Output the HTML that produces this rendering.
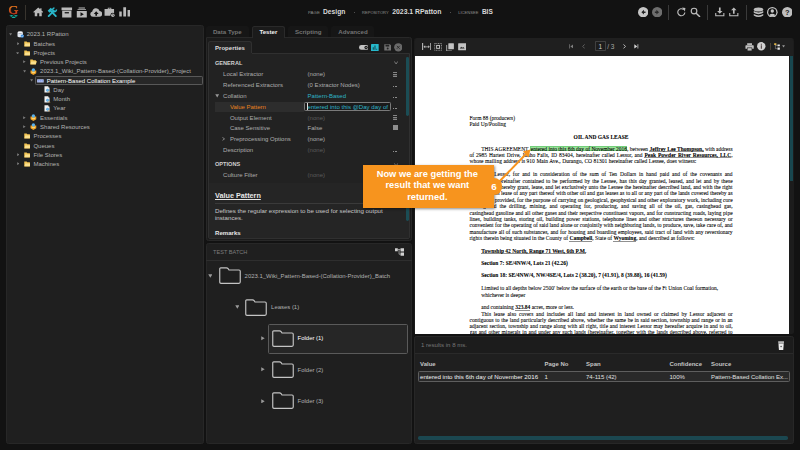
<!DOCTYPE html>
<html><head><meta charset="utf-8"><title>Grooper Design - Pattern-Based Collation</title>
<style>
html,body{margin:0;padding:0;}
body{width:800px;height:450px;overflow:hidden;background:#121212;position:relative;font-family:"Liberation Sans",sans-serif;}
div,svg{position:absolute;box-sizing:border-box;}
.t{white-space:nowrap;}
.d{white-space:nowrap;font-family:"Liberation Serif",serif;color:#000;-webkit-text-stroke:0.07px #000;}
.j{font-family:"Liberation Serif",serif;color:#000;-webkit-text-stroke:0.07px #000;text-align:justify;text-align-last:justify;white-space:nowrap;}
b{font-weight:700;}
u{text-decoration:none;background:linear-gradient(#000,#000) 0 97%/100% 0.45px no-repeat;}
</style></head><body>
<div style="left:6.10px;top:25.30px;width:197.60px;height:418.50px;background:#1f1f1f;border-radius:2.5px;border:0.6px solid #272727;"></div>
<div style="left:205.70px;top:37.00px;width:206.20px;height:203.70px;background:#1b1b1b;border-radius:0 2.5px 2.5px 2.5px;border:0.5px solid #282828;"></div>
<div style="left:205.70px;top:242.90px;width:206.20px;height:200.90px;background:#1f1f1f;border-radius:2.5px;border:0.6px solid #272727;"></div>
<div style="left:414.10px;top:37.50px;width:379.90px;height:296.60px;background:#1c1c1c;border-radius:2.5px;"></div>
<div style="left:414.10px;top:335.80px;width:379.90px;height:108.00px;background:#1f1f1f;border-radius:2.5px;border:0.6px solid #272727;"></div>
<div class="t" style="left:8.50px;top:2.60px;line-height:14px;font-size:13.4px;color:transparent;font-family:'Liberation Serif',serif;background:linear-gradient(#ea8a1c 25%,#d42a20 80%);-webkit-background-clip:text;background-clip:text;-webkit-text-stroke:0.25px #d85a1e;">G</div>
<svg style="left:8.80px;top:14.60px;" width="9.40" height="3.80" viewBox="0 0 19 8"><path d="M0.4 1.8 L4.8 0.2 L9 1.8 L4.8 3.6Z M9.8 1.8 L14.2 0.2 L18.4 1.8 L14.2 3.6Z M4.8 5.4 L9.4 3.4 L14 5.4 L9.4 7.6Z" fill="#12b2a2"/></svg>
<div style="left:24.80px;top:4.80px;width:1.10px;height:15.20px;background:#38342e;"></div>
<svg style="left:32.80px;top:7.00px;" width="10.50" height="9.50" viewBox="0 0 21 19"><path d="M10.5 1 L0.5 10 L2 11.5 L3.5 10.2 V18.5 H8.5 V12.5 H12.5 V18.5 H17.5 V10.2 L19 11.5 L20.5 10 L17 6.8 V2.5 H14.5 V4.6Z" fill="#b9b9b9"/></svg>
<svg style="left:47.20px;top:6.90px;" width="10.40" height="10.40" viewBox="0 0 20 20"><g fill="none" stroke="#29b8cb" stroke-linecap="round"><path d="M3.2 17.4 L13.2 7.4" stroke-width="3.5"/><path d="M17 17.4 L8.2 8.6" stroke-width="3.5"/><path d="M3.2 9 L9 3.2" stroke-width="5.2" stroke-linecap="butt"/><path d="M18 4.8 A3.5 3.5 0 1 1 14.4 1.9" stroke-width="3" stroke-linecap="butt"/></g></svg>
<svg style="left:61.10px;top:6.50px;" width="11.60" height="11.20" viewBox="0 0 22 21"><path d="M1 1 H21 V6 H1Z M2.2 7.2 H19.8 V20 H2.2Z" fill="#b9b9b9"/><rect x="7" y="9.6" width="8" height="2.4" fill="#121212"/></svg>
<svg style="left:75.50px;top:6.50px;" width="11.60" height="11.20" viewBox="0 0 22 21"><path d="M5 1 H17 V2.6 H5Z M3 4 H19 V5.8 H3Z M1.5 7.4 H20.5 V20 H1.5Z" fill="#b9b9b9"/><path d="M8.5 9.8 L14.8 13.7 L8.5 17.6Z" fill="#121212"/></svg>
<svg style="left:89.80px;top:7.60px;" width="12.40" height="9.20" viewBox="0 0 25 18"><path d="M6 17.5 A5.5 5.5 0 0 1 4.6 6.7 A7.6 7.6 0 0 1 19.4 5.6 A6 6 0 0 1 19.5 17.5Z" fill="#b9b9b9"/><path d="M12.5 6.5 L17.4 11.6 H14.2 V15.6 H10.8 V11.6 H7.6Z" fill="#121212"/></svg>
<svg style="left:104.30px;top:6.80px;" width="11.60" height="11.00" viewBox="0 0 23 22"><path d="M7.5 4 V1.5 H14.5 V4 H20 V17.5 H1 V4Z M9.2 3 V4 H12.8 V3Z" fill="#b9b9b9"/><circle cx="17.6" cy="16.4" r="4.8" fill="#121212"/><circle cx="17.6" cy="16.4" r="3.5" fill="#b9b9b9"/><path d="M17.3 14 H18.2 V16.2 L19.6 17.2 L19.1 17.9 L17.3 16.7Z" fill="#121212"/></svg>
<svg style="left:118.60px;top:7.00px;" width="11.60" height="9.60" viewBox="0 0 23 19"><path d="M0.5 9 H5.5 V19 H0.5Z M8.5 0.5 H14 V19 H8.5Z M17 6 H22.5 V19 H17Z" fill="#b9b9b9"/></svg>
<div class="t" style="left:308.00px;top:7.70px;line-height:10px;font-size:4.35px;color:#8e8e8e;letter-spacing:0.05px;">PAGE</div>
<div class="t" style="left:323.00px;top:7.10px;line-height:10px;font-size:6.7px;color:#d9d9d9;font-weight:700;">Design</div>
<div style="left:353.50px;top:11.60px;width:1.20px;height:1.20px;background:#666;border-radius:50%;"></div>
<div class="t" style="left:362.00px;top:7.70px;line-height:10px;font-size:4.1px;color:#8e8e8e;">REPOSITORY</div>
<div class="t" style="left:392.20px;top:7.10px;line-height:10px;font-size:6.86px;color:#d9d9d9;font-weight:700;">2023.1 RPatton</div>
<div style="left:449.80px;top:11.60px;width:1.20px;height:1.20px;background:#666;border-radius:50%;"></div>
<div class="t" style="left:458.20px;top:7.70px;line-height:10px;font-size:4.1px;color:#8e8e8e;">LICENSEE</div>
<div class="t" style="left:481.90px;top:7.10px;line-height:10px;font-size:6.5px;color:#d9d9d9;font-weight:700;">BIS</div>
<svg style="left:637.50px;top:6.90px;" width="10.40" height="10.40" viewBox="0 0 20 20"><circle cx="10" cy="10" r="10" fill="#c6c6c6"/><path d="M11.5 5.5 L6.5 10 L11.5 14.5 V11.5 H14.5 V8.5 H11.5Z" fill="#222"/></svg>
<svg style="left:652.00px;top:6.90px;" width="10.40" height="10.40" viewBox="0 0 20 20"><circle cx="10" cy="10" r="10" fill="#6e6e6e"/><path d="M8.5 5.5 L13.5 10 L8.5 14.5 V11.5 H5.5 V8.5 H8.5Z" fill="#2a2a2a"/></svg>
<div style="left:668.40px;top:5.00px;width:0.70px;height:15.00px;background:#3a3a3a;"></div>
<svg style="left:675.80px;top:6.80px;" width="10.60" height="10.60" viewBox="0 0 21 21"><path d="M15.2 5.2 A7 7 0 1 0 17.5 10.8" fill="none" stroke="#bcbcbc" stroke-width="2.3"/><path d="M11.5 1.5 H18.2 V8.3Z" fill="#bcbcbc" transform="rotate(8 15 5)"/></svg>
<svg style="left:690.30px;top:6.80px;" width="10.60" height="10.60" viewBox="0 0 21 21"><circle cx="8" cy="8" r="5.6" fill="none" stroke="#bcbcbc" stroke-width="2.3"/><path d="M12.2 12.2 L19 19" stroke="#bcbcbc" stroke-width="2.8" stroke-linecap="round"/></svg>
<div style="left:706.80px;top:5.00px;width:0.70px;height:15.00px;background:#3a3a3a;"></div>
<svg style="left:715.30px;top:7.20px;" width="9.60" height="9.80" viewBox="0 0 19 20"><path d="M7.8 1 H11.2 V8 H15 L9.5 13.6 L4 8 H7.8Z" fill="#bcbcbc"/><path d="M1.2 12.5 V18 H17.8 V12.5" fill="none" stroke="#bcbcbc" stroke-width="2.2"/></svg>
<svg style="left:729.30px;top:7.20px;" width="9.60" height="9.80" viewBox="0 0 19 20"><path d="M7.8 13.6 H11.2 V6.6 H15 L9.5 1 L4 6.6 H7.8Z" fill="#bcbcbc"/><path d="M1.2 12.5 V18 H17.8 V12.5" fill="none" stroke="#bcbcbc" stroke-width="2.2"/></svg>
<div style="left:745.70px;top:5.00px;width:0.70px;height:15.00px;background:#3a3a3a;"></div>
<svg style="left:752.60px;top:6.60px;" width="11.00" height="11.00" viewBox="0 0 22 22"><ellipse cx="11" cy="5" rx="9.5" ry="4" fill="#bebebe"/><path d="M1.5 8.2 Q11 14 20.5 8.2 V11.6 Q11 17.4 1.5 11.6Z M1.5 14 Q11 19.8 20.5 14 V17 Q11 23 1.5 17Z" fill="#bebebe"/></svg>
<svg style="left:767.30px;top:6.80px;" width="10.60" height="10.60" viewBox="0 0 20 20"><circle cx="10" cy="10" r="10" fill="#c6c6c6"/><circle cx="10" cy="10" r="7.6" fill="#121212"/><circle cx="10" cy="7.6" r="3.2" fill="#c6c6c6"/><path d="M3.8 15.4 Q10 10 16.2 15.4 Q10 19.4 3.8 15.4Z" fill="#c6c6c6"/></svg>
<svg style="left:781.90px;top:6.80px;" width="10.60" height="10.60" viewBox="0 0 20 20"><circle cx="10" cy="10" r="10" fill="#bebebe"/><text x="10" y="15" text-anchor="middle" font-family="Liberation Sans, sans-serif" font-weight="700" font-size="14" fill="#1a1a1a">?</text></svg>
<div style="left:35.10px;top:75.70px;width:167.60px;height:9.20px;background:#272727;border:0.55px solid #585858;border-radius:1.2px;"></div>
<svg style="left:9.36px;top:33.07px;" width="3.28" height="2.79" viewBox="0 0 8 7"><path d="M0.3 0.5 H7.7 L4 6.6Z" fill="#7e7e7e"/></svg>
<svg style="left:17.00px;top:30.70px;" width="7.40" height="7.40" viewBox="0 0 15 15"><ellipse cx="6.5" cy="2.8" rx="5.5" ry="2.3" fill="#f4f6fa"/><path d="M1 3.6 V11.2 Q6.5 14.6 12 11.2 V3.6 Q6.5 6.6 1 3.6Z" fill="#dfe6f0"/><circle cx="10.8" cy="10.4" r="3.4" fill="#3d8fe0"/><path d="M9 10.4 L10.4 11.8 L12.8 9.2" stroke="#fff" stroke-width="1" fill="none"/></svg>
<div class="t" style="left:26.75px;top:29.40px;line-height:10px;font-size:6.02px;color:#b2b2b2;">2023.1 RPatton</div>
<svg style="left:16.52px;top:41.92px;" width="2.79" height="3.28" viewBox="0 0 7 8"><path d="M0.5 0.3 V7.7 L6.6 4Z" fill="#7e7e7e"/></svg>
<svg style="left:23.50px;top:40.86px;" width="6.80" height="5.80" viewBox="0 0 14 12"><path d="M0.5 1.2 H5.4 L6.8 2.8 H12.2 V4.2 H13.8 L12.2 11.5 H0.5Z" fill="#f3c453"/><path d="M2.4 5.2 H13.4 L11.8 10.8 H1.2Z" fill="#fbe08e"/></svg>
<div class="t" style="left:33.40px;top:38.66px;line-height:10px;font-size:6.02px;color:#b2b2b2;">Batches</div>
<svg style="left:16.11px;top:51.59px;" width="3.28" height="2.79" viewBox="0 0 8 7"><path d="M0.3 0.5 H7.7 L4 6.6Z" fill="#7e7e7e"/></svg>
<svg style="left:23.50px;top:50.12px;" width="6.80" height="5.80" viewBox="0 0 14 12"><path d="M0.5 1.2 H5.4 L6.8 2.8 H12.2 V4.2 H13.8 L12.2 11.5 H0.5Z" fill="#f3c453"/><path d="M2.4 5.2 H13.4 L11.8 10.8 H1.2Z" fill="#fbe08e"/></svg>
<div class="t" style="left:33.40px;top:47.92px;line-height:10px;font-size:6.02px;color:#b2b2b2;">Projects</div>
<svg style="left:23.27px;top:60.44px;" width="2.79" height="3.28" viewBox="0 0 7 8"><path d="M0.5 0.3 V7.7 L6.6 4Z" fill="#7e7e7e"/></svg>
<svg style="left:30.20px;top:59.38px;" width="6.80" height="5.80" viewBox="0 0 14 12"><path d="M0.5 1.2 H5.4 L6.8 2.8 H12.2 V4.2 H13.8 L12.2 11.5 H0.5Z" fill="#f3c453"/><path d="M2.4 5.2 H13.4 L11.8 10.8 H1.2Z" fill="#fbe08e"/></svg>
<div class="t" style="left:40.05px;top:57.18px;line-height:10px;font-size:6.02px;color:#b2b2b2;">Previous Projects</div>
<svg style="left:22.86px;top:70.11px;" width="3.28" height="2.79" viewBox="0 0 8 7"><path d="M0.3 0.5 H7.7 L4 6.6Z" fill="#7e7e7e"/></svg>
<svg style="left:30.40px;top:67.74px;" width="6.80" height="7.20" viewBox="0 0 14 15"><path d="M1 5 H13 V11 L7 14.6 L1 11Z" fill="#f0a428"/><circle cx="7" cy="4" r="3.6" fill="#59b0ea"/><path d="M3.6 8.2 H10.4 V10.6 H3.6Z" fill="#fbd372"/></svg>
<div class="t" style="left:40.05px;top:66.44px;line-height:10px;font-size:6.02px;color:#b2b2b2;">2023.1_Wiki_Pattern-Based-(Collation-Provider)_Project</div>
<svg style="left:29.61px;top:79.37px;" width="3.28" height="2.79" viewBox="0 0 8 7"><path d="M0.3 0.5 H7.7 L4 6.6Z" fill="#7e7e7e"/></svg>
<svg style="left:37.10px;top:79.20px;" width="6.80" height="3.80" viewBox="0 0 14 8"><rect x="0" y="0.3" width="14" height="7.2" rx="0.8" fill="#b4c2f0"/><path d="M1.5 3 H4.5 V5 H1.5Z M5.8 3 H8.6 V5 H5.8Z M9.8 3 H12.6 V5 H9.8Z" fill="#5f7fd8"/></svg>
<div class="t" style="left:46.70px;top:75.70px;line-height:10px;font-size:6.02px;color:#ffffff;">Pattern-Based Collation Example</div>
<svg style="left:43.80px;top:86.46px;" width="6.80" height="7.00" viewBox="0 0 14 14"><path d="M1 0.5 H8 L11.4 3.8 V13 H1Z" fill="#f1f1f1"/><path d="M8 0.5 V3.8 H11.4Z" fill="#bcbcbc"/><circle cx="7.4" cy="8.6" r="2.5" fill="#6fbdf0" stroke="#2d7fc4" stroke-width="0.8"/><path d="M9.4 10.6 L12 13.2" stroke="#e7a22a" stroke-width="1.5"/></svg>
<div class="t" style="left:53.35px;top:84.96px;line-height:10px;font-size:6.02px;color:#b2b2b2;">Day</div>
<svg style="left:43.80px;top:95.72px;" width="6.80" height="7.00" viewBox="0 0 14 14"><path d="M1 0.5 H8 L11.4 3.8 V13 H1Z" fill="#f1f1f1"/><path d="M8 0.5 V3.8 H11.4Z" fill="#bcbcbc"/><circle cx="7.4" cy="8.6" r="2.5" fill="#6fbdf0" stroke="#2d7fc4" stroke-width="0.8"/><path d="M9.4 10.6 L12 13.2" stroke="#e7a22a" stroke-width="1.5"/></svg>
<div class="t" style="left:53.35px;top:94.22px;line-height:10px;font-size:6.02px;color:#b2b2b2;">Month</div>
<svg style="left:43.80px;top:104.98px;" width="6.80" height="7.00" viewBox="0 0 14 14"><path d="M1 0.5 H8 L11.4 3.8 V13 H1Z" fill="#f1f1f1"/><path d="M8 0.5 V3.8 H11.4Z" fill="#bcbcbc"/><circle cx="7.4" cy="8.6" r="2.5" fill="#6fbdf0" stroke="#2d7fc4" stroke-width="0.8"/><path d="M9.4 10.6 L12 13.2" stroke="#e7a22a" stroke-width="1.5"/></svg>
<div class="t" style="left:53.35px;top:103.48px;line-height:10px;font-size:6.02px;color:#b2b2b2;">Year</div>
<svg style="left:23.27px;top:116.00px;" width="2.79" height="3.28" viewBox="0 0 7 8"><path d="M0.5 0.3 V7.7 L6.6 4Z" fill="#7e7e7e"/></svg>
<svg style="left:30.40px;top:114.04px;" width="6.80" height="7.20" viewBox="0 0 14 15"><path d="M1 5 H13 V11 L7 14.6 L1 11Z" fill="#f0a428"/><circle cx="7" cy="4" r="3.6" fill="#59b0ea"/><path d="M3.6 8.2 H10.4 V10.6 H3.6Z" fill="#fbd372"/></svg>
<div class="t" style="left:40.05px;top:112.74px;line-height:10px;font-size:6.02px;color:#b2b2b2;">Essentials</div>
<svg style="left:23.27px;top:125.26px;" width="2.79" height="3.28" viewBox="0 0 7 8"><path d="M0.5 0.3 V7.7 L6.6 4Z" fill="#7e7e7e"/></svg>
<svg style="left:30.40px;top:123.30px;" width="6.80" height="7.20" viewBox="0 0 14 15"><path d="M1 5 H13 V11 L7 14.6 L1 11Z" fill="#f0a428"/><circle cx="7" cy="4" r="3.6" fill="#59b0ea"/><path d="M3.6 8.2 H10.4 V10.6 H3.6Z" fill="#fbd372"/></svg>
<div class="t" style="left:40.05px;top:122.00px;line-height:10px;font-size:6.02px;color:#b2b2b2;">Shared Resources</div>
<svg style="left:23.50px;top:133.46px;" width="6.80" height="5.80" viewBox="0 0 14 12"><path d="M0.5 1.2 H5.4 L6.8 2.8 H12.2 V4.2 H13.8 L12.2 11.5 H0.5Z" fill="#f3c453"/><path d="M2.4 5.2 H13.4 L11.8 10.8 H1.2Z" fill="#fbe08e"/></svg>
<div class="t" style="left:33.40px;top:131.26px;line-height:10px;font-size:6.02px;color:#b2b2b2;">Processes</div>
<svg style="left:23.50px;top:142.72px;" width="6.80" height="5.80" viewBox="0 0 14 12"><path d="M0.5 1.2 H5.4 L6.8 2.8 H12.2 V4.2 H13.8 L12.2 11.5 H0.5Z" fill="#f3c453"/><path d="M2.4 5.2 H13.4 L11.8 10.8 H1.2Z" fill="#fbe08e"/></svg>
<div class="t" style="left:33.40px;top:140.52px;line-height:10px;font-size:6.02px;color:#b2b2b2;">Queues</div>
<svg style="left:16.52px;top:153.04px;" width="2.79" height="3.28" viewBox="0 0 7 8"><path d="M0.5 0.3 V7.7 L6.6 4Z" fill="#7e7e7e"/></svg>
<svg style="left:23.50px;top:151.98px;" width="6.80" height="5.80" viewBox="0 0 14 12"><path d="M0.5 1.2 H5.4 L6.8 2.8 H12.2 V4.2 H13.8 L12.2 11.5 H0.5Z" fill="#f3c453"/><path d="M2.4 5.2 H13.4 L11.8 10.8 H1.2Z" fill="#fbe08e"/></svg>
<div class="t" style="left:33.40px;top:149.78px;line-height:10px;font-size:6.02px;color:#b2b2b2;">File Stores</div>
<svg style="left:16.52px;top:162.30px;" width="2.79" height="3.28" viewBox="0 0 7 8"><path d="M0.5 0.3 V7.7 L6.6 4Z" fill="#7e7e7e"/></svg>
<svg style="left:23.50px;top:161.24px;" width="6.80" height="5.80" viewBox="0 0 14 12"><path d="M0.5 1.2 H5.4 L6.8 2.8 H12.2 V4.2 H13.8 L12.2 11.5 H0.5Z" fill="#f3c453"/><path d="M2.4 5.2 H13.4 L11.8 10.8 H1.2Z" fill="#fbe08e"/></svg>
<div class="t" style="left:33.40px;top:159.04px;line-height:10px;font-size:6.02px;color:#b2b2b2;">Machines</div>
<div style="left:206.00px;top:25.80px;width:43.00px;height:11.20px;background:#161616;border-radius:2.5px 2.5px 0 0;"></div>
<div class="t" style="left:212.90px;top:26.80px;line-height:10px;font-size:6.15px;color:#737373;font-weight:700;">Data Type</div>
<div style="left:288.20px;top:25.80px;width:39.40px;height:11.20px;background:#161616;border-radius:2.5px 2.5px 0 0;"></div>
<div class="t" style="left:294.90px;top:26.80px;line-height:10px;font-size:6.15px;color:#737373;font-weight:700;">Scripting</div>
<div style="left:331.30px;top:25.80px;width:42.70px;height:11.20px;background:#161616;border-radius:2.5px 2.5px 0 0;"></div>
<div class="t" style="left:338.30px;top:26.80px;line-height:10px;font-size:6.15px;color:#737373;font-weight:700;">Advanced</div>
<div style="left:252.10px;top:25.80px;width:32.50px;height:11.80px;background:#1b1b1b;border-radius:2.5px 2.5px 0 0;border:0.5px solid #2a2a2a;border-bottom:none;"></div>
<div class="t" style="left:259.40px;top:26.80px;line-height:10px;font-size:6.15px;color:#f2f2f2;font-weight:700;">Tester</div>
<div style="left:208.10px;top:41.10px;width:44.00px;height:13.00px;background:#222222;border-radius:2.5px 2.5px 0 0;border:0.5px solid #303030;border-bottom:none;"></div>
<div style="left:208.10px;top:53.40px;width:201.80px;height:185.20px;background:#222222;border:0.5px solid #303030;border-radius:0 0 2px 2px;"></div>
<div style="left:208.60px;top:53.00px;width:43.00px;height:1.20px;background:#222222;"></div>
<div class="t" style="left:215.00px;top:43.00px;line-height:10px;font-size:6.06px;color:#dedede;font-weight:700;">Properties</div>
<svg style="left:358.70px;top:45.10px;" width="9.60" height="4.90" viewBox="0 0 20 10"><rect x="0" y="0" width="20" height="10" rx="5" fill="#c4c4c4"/><circle cx="14.8" cy="5" r="3.6" fill="#1e1e1e"/><circle cx="14.8" cy="5" r="1.1" fill="#c4c4c4"/></svg>
<svg style="left:371.40px;top:43.80px;" width="7.70" height="7.20" viewBox="0 0 16 15"><rect width="16" height="15" rx="0.8" fill="#27b9cc"/><path d="M3.6 7 H5.8 V12 H3.6Z M7.2 3.2 H9.4 V12 H7.2Z M10.8 9.8 H12.8 V12 H10.8Z" fill="#124c55"/></svg>
<svg style="left:383.50px;top:44.30px;" width="7.40" height="6.80" viewBox="0 0 15 14"><path d="M0.5 0.5 H11.8 L14.5 3 V13.5 H0.5Z" fill="#727272"/><rect x="3" y="1.6" width="7.6" height="3.6" fill="#222"/><circle cx="7.5" cy="9.4" r="2" fill="#222"/></svg>
<svg style="left:393.50px;top:43.30px;" width="8.60" height="8.60" viewBox="0 0 17 17"><circle cx="8.5" cy="8.5" r="8.2" fill="#6a6a6a"/><path d="M5.6 5.6 L11.4 11.4 M11.4 5.6 L5.6 11.4" stroke="#262626" stroke-width="1.7"/></svg>
<div class="t" style="left:215.00px;top:57.80px;line-height:10px;font-size:5.6px;color:#d0d0d0;font-weight:700;">GENERAL</div>
<svg style="left:394.30px;top:61.30px;" width="4.20" height="3.60" viewBox="0 0 8 7"><path d="M0.6 0.8 L4 5.8 L7.4 0.8" fill="none" stroke="#a0a0a0" stroke-width="1.3"/></svg>
<div class="t" style="left:215.00px;top:159.10px;line-height:10px;font-size:5.6px;color:#d0d0d0;font-weight:700;">OPTIONS</div>
<svg style="left:394.30px;top:162.60px;" width="4.20" height="3.60" viewBox="0 0 8 7"><path d="M0.6 0.8 L4 5.8 L7.4 0.8" fill="none" stroke="#a0a0a0" stroke-width="1.3"/></svg>
<div style="left:215.00px;top:101.60px;width:89.20px;height:10.00px;background:#2d2d2d;"></div>
<div class="t" style="left:223.10px;top:69.30px;line-height:10px;font-size:6.02px;color:#adadad;">Local Extractor</div>
<div class="t" style="left:307.60px;top:69.30px;line-height:10px;font-size:6.02px;color:#adadad;">(none)</div>
<svg style="left:392.80px;top:71.70px;" width="4.40" height="5.40" viewBox="0 0 8 10"><path d="M0 0.4 H8 V2 H0Z M0 4.2 H8 V5.8 H0Z M0 8 H8 V9.6 H0Z" fill="#a8a8a8"/></svg>
<div class="t" style="left:223.10px;top:80.00px;line-height:10px;font-size:6.02px;color:#adadad;">Referenced Extractors</div>
<div class="t" style="left:307.60px;top:80.00px;line-height:10px;font-size:6.02px;color:#adadad;">(0 Extractor Nodes)</div>
<div style="left:392.90px;top:86.10px;width:0.90px;height:0.90px;background:#8e8e8e;"></div>
<div style="left:394.55px;top:86.10px;width:0.90px;height:0.90px;background:#8e8e8e;"></div>
<div style="left:396.20px;top:86.10px;width:0.90px;height:0.90px;background:#8e8e8e;"></div>
<svg style="left:215.30px;top:94.10px;" width="4.40" height="3.70" viewBox="0 0 8 7"><path d="M0.3 0.5 H7.7 L4 6.6Z" fill="#989898"/></svg>
<div class="t" style="left:223.10px;top:90.80px;line-height:10px;font-size:6.02px;color:#adadad;">Collation</div>
<div class="t" style="left:307.60px;top:90.80px;line-height:10px;font-size:6.02px;color:#2fb4c8;">Pattern-Based</div>
<div style="left:392.90px;top:96.90px;width:0.90px;height:0.90px;background:#8e8e8e;"></div>
<div style="left:394.55px;top:96.90px;width:0.90px;height:0.90px;background:#8e8e8e;"></div>
<div style="left:396.20px;top:96.90px;width:0.90px;height:0.90px;background:#8e8e8e;"></div>
<div class="t" style="left:229.90px;top:101.60px;line-height:10px;font-size:6.02px;color:#e8821e;">Value Pattern</div>
<div style="left:392.90px;top:107.70px;width:0.90px;height:0.90px;background:#8e8e8e;"></div>
<div style="left:394.55px;top:107.70px;width:0.90px;height:0.90px;background:#8e8e8e;"></div>
<div style="left:396.20px;top:107.70px;width:0.90px;height:0.90px;background:#8e8e8e;"></div>
<div style="left:304.20px;top:101.90px;width:86.80px;height:9.50px;background:#1a1a1a;border:0.55px solid #7a7a7a;border-radius:1.3px;overflow:hidden;"></div>
<div style="left:307.20px;top:103.30px;width:0.50px;height:6.60px;background:#e0e0e0;"></div>
<div class="t" style="left:307.60px;top:101.60px;line-height:10px;font-size:6.1px;color:#2fb4c8;">entered into this @Day day of</div>
<div class="t" style="left:229.90px;top:112.50px;line-height:10px;font-size:6.02px;color:#adadad;">Output Element</div>
<div class="t" style="left:307.60px;top:112.50px;line-height:10px;font-size:6.02px;color:#5c5c5c;">(none)</div>
<svg style="left:392.80px;top:114.90px;" width="4.40" height="5.40" viewBox="0 0 8 10"><path d="M0 0.4 H8 V2 H0Z M0 4.2 H8 V5.8 H0Z M0 8 H8 V9.6 H0Z" fill="#a8a8a8"/></svg>
<div class="t" style="left:229.90px;top:123.30px;line-height:10px;font-size:6.02px;color:#adadad;">Case Sensitive</div>
<div class="t" style="left:307.60px;top:123.30px;line-height:10px;font-size:6.02px;color:#adadad;">False</div>
<div style="left:392.80px;top:125.20px;width:5.00px;height:4.90px;background:#8e8e8e;"></div>
<svg style="left:222.40px;top:137.20px;" width="3.20" height="3.80" viewBox="0 0 7 8"><path d="M1 0.8 L5.6 4 L1 7.2" fill="none" stroke="#b0b0b0" stroke-width="1.5"/></svg>
<div class="t" style="left:229.90px;top:134.10px;line-height:10px;font-size:6.02px;color:#adadad;">Preprocessing Options</div>
<div class="t" style="left:307.60px;top:134.10px;line-height:10px;font-size:6.02px;color:#adadad;">(none)</div>
<div class="t" style="left:223.10px;top:144.90px;line-height:10px;font-size:6.02px;color:#adadad;">Description</div>
<div class="t" style="left:307.60px;top:144.90px;line-height:10px;font-size:6.02px;color:#5c5c5c;">(none)</div>
<div style="left:392.90px;top:151.00px;width:0.90px;height:0.90px;background:#8e8e8e;"></div>
<div style="left:394.55px;top:151.00px;width:0.90px;height:0.90px;background:#8e8e8e;"></div>
<div style="left:396.20px;top:151.00px;width:0.90px;height:0.90px;background:#8e8e8e;"></div>
<div class="t" style="left:223.10px;top:170.10px;line-height:10px;font-size:6.02px;color:#adadad;">Culture Filter</div>
<div class="t" style="left:307.60px;top:170.10px;line-height:10px;font-size:6.02px;color:#5c5c5c;">(none)</div>
<div style="left:406.10px;top:57.10px;width:2.80px;height:59.30px;background:#1b4d55;border-radius:1.4px;"></div>
<div style="left:208.60px;top:183.30px;width:200.80px;height:55.00px;background:#252525;"></div>
<div class="t" style="left:215.00px;top:190.60px;line-height:10px;font-size:7.24px;color:#e6e6e6;font-weight:700;text-decoration:underline;text-decoration-thickness:0.5px;text-underline-offset:0.8px;">Value Pattern</div>
<div style="left:215.00px;top:202.90px;width:189.00px;height:0.50px;background:#3a3a3a;"></div>
<div class="t" style="left:215.00px;top:205.80px;line-height:10px;font-size:6.17px;color:#c8c8c8;">Defines the regular expression to be used for selecting output</div>
<div class="t" style="left:215.00px;top:213.40px;line-height:10px;font-size:6.17px;color:#c8c8c8;">instances.</div>
<div class="t" style="left:215.00px;top:228.10px;line-height:10px;font-size:6.1px;color:#e6e6e6;font-weight:700;">Remarks</div>
<div style="left:406.10px;top:203.70px;width:2.80px;height:17.20px;background:#1b4d55;border-radius:1.4px;"></div>
<div class="t" style="left:213.10px;top:247.00px;line-height:10px;font-size:5.6px;color:#7c7c7c;">TEST BATCH</div>
<div style="left:206.00px;top:260.30px;width:205.60px;height:0.50px;background:#2e2e2e;"></div>
<svg style="left:395.00px;top:247.80px;" width="9.40" height="7.90" viewBox="0 0 19 16"><path d="M0 0.3 H5.6 V6.4 H0Z M11.2 0.3 H19 V7 H11.2Z M11.2 9.2 H19 V15.8 H11.2Z" fill="#d2d2d2"/><path d="M5.6 3 H11.2 M8.2 3 V12.6 H11.2" fill="none" stroke="#cfcfcf" stroke-width="1.3"/></svg>
<div style="left:267.50px;top:323.70px;width:140.60px;height:30.00px;background:#262626;border:0.55px solid #5a5a5a;border-radius:1.6px;"></div>
<svg style="left:207.90px;top:274.27px;" width="4.60" height="3.91" viewBox="0 0 8 7"><path d="M0.3 0.5 H7.7 L4 6.6Z" fill="#9a9a9a"/></svg>
<svg style="left:218.80px;top:267.20px;" width="22.00" height="17.20" viewBox="0 0 44 34"><path d="M3.5 1.5 H15 Q17 1.5 18.2 3.2 L20 5.8 H40 Q42.5 5.8 42.5 8.3 V30 Q42.5 32.5 40 32.5 H4 Q1.5 32.5 1.5 30 V3.5 Q1.5 1.5 3.5 1.5Z" fill="none" stroke="#c4c4c4" stroke-width="2.3"/></svg>
<div class="t" style="left:244.60px;top:271.00px;line-height:10px;font-size:5.95px;color:#b0b0b0;">2023.1_Wiki_Pattern-Based-(Collation-Provider)_Batch</div>
<svg style="left:234.50px;top:305.47px;" width="4.60" height="3.91" viewBox="0 0 8 7"><path d="M0.3 0.5 H7.7 L4 6.6Z" fill="#9a9a9a"/></svg>
<svg style="left:245.00px;top:298.60px;" width="22.00" height="17.20" viewBox="0 0 44 34"><path d="M3.5 1.5 H15 Q17 1.5 18.2 3.2 L20 5.8 H40 Q42.5 5.8 42.5 8.3 V30 Q42.5 32.5 40 32.5 H4 Q1.5 32.5 1.5 30 V3.5 Q1.5 1.5 3.5 1.5Z" fill="none" stroke="#c4c4c4" stroke-width="2.3"/></svg>
<div class="t" style="left:271.10px;top:302.20px;line-height:10px;font-size:5.95px;color:#b0b0b0;">Leases (1)</div>
<svg style="left:261.27px;top:336.00px;" width="3.91" height="4.60" viewBox="0 0 7 8"><path d="M0.5 0.3 V7.7 L6.6 4Z" fill="#9a9a9a"/></svg>
<svg style="left:272.00px;top:329.80px;" width="22.00" height="17.20" viewBox="0 0 44 34"><path d="M3.5 1.5 H15 Q17 1.5 18.2 3.2 L20 5.8 H40 Q42.5 5.8 42.5 8.3 V30 Q42.5 32.5 40 32.5 H4 Q1.5 32.5 1.5 30 V3.5 Q1.5 1.5 3.5 1.5Z" fill="none" stroke="#c4c4c4" stroke-width="2.3"/></svg>
<div class="t" style="left:297.60px;top:333.40px;line-height:10px;font-size:5.95px;color:#ffffff;">Folder (1)</div>
<svg style="left:261.27px;top:367.30px;" width="3.91" height="4.60" viewBox="0 0 7 8"><path d="M0.5 0.3 V7.7 L6.6 4Z" fill="#9a9a9a"/></svg>
<svg style="left:272.00px;top:361.00px;" width="22.00" height="17.20" viewBox="0 0 44 34"><path d="M3.5 1.5 H15 Q17 1.5 18.2 3.2 L20 5.8 H40 Q42.5 5.8 42.5 8.3 V30 Q42.5 32.5 40 32.5 H4 Q1.5 32.5 1.5 30 V3.5 Q1.5 1.5 3.5 1.5Z" fill="none" stroke="#c4c4c4" stroke-width="2.3"/></svg>
<div class="t" style="left:297.60px;top:364.60px;line-height:10px;font-size:5.95px;color:#b0b0b0;">Folder (2)</div>
<svg style="left:261.27px;top:398.60px;" width="3.91" height="4.60" viewBox="0 0 7 8"><path d="M0.5 0.3 V7.7 L6.6 4Z" fill="#9a9a9a"/></svg>
<svg style="left:272.00px;top:392.30px;" width="22.00" height="17.20" viewBox="0 0 44 34"><path d="M3.5 1.5 H15 Q17 1.5 18.2 3.2 L20 5.8 H40 Q42.5 5.8 42.5 8.3 V30 Q42.5 32.5 40 32.5 H4 Q1.5 32.5 1.5 30 V3.5 Q1.5 1.5 3.5 1.5Z" fill="none" stroke="#c4c4c4" stroke-width="2.3"/></svg>
<div class="t" style="left:297.60px;top:395.90px;line-height:10px;font-size:5.95px;color:#b0b0b0;">Folder (3)</div>
<div style="left:414.70px;top:38.00px;width:378.80px;height:17.60px;background-color:#1f1f1f;border-radius:2.5px 2.5px 0 0;"></div>
<svg style="left:421.50px;top:42.90px;" width="9.40" height="7.60" viewBox="0 0 19 15"><path d="M0.2 0 H2.3 V15 H0.2Z M16.7 0 H18.8 V15 H16.7Z" fill="#c2c2c2"/><path d="M3.2 7.5 L6.4 4.6 V6.7 H12.6 V4.6 L15.8 7.5 L12.6 10.4 V8.3 H6.4 V10.4Z" fill="#c2c2c2"/></svg>
<svg style="left:434.00px;top:42.90px;" width="8.20" height="7.80" viewBox="0 0 16 16"><rect x="1" y="1" width="14" height="14" fill="none" stroke="#c2c2c2" stroke-width="1.4" stroke-dasharray="2 1.4"/><rect x="5" y="5" width="6" height="6" fill="none" stroke="#c2c2c2" stroke-width="2"/></svg>
<svg style="left:445.60px;top:42.60px;" width="8.20" height="8.60" viewBox="0 0 16 17"><rect x="4.5" y="0.5" width="11" height="12" rx="1" fill="#c2c2c2"/><path d="M1.2 4 V15.8 H11.5" fill="none" stroke="#c2c2c2" stroke-width="1.6"/></svg>
<svg style="left:457.60px;top:43.20px;" width="8.40" height="7.40" viewBox="0 0 17 15"><rect x="0.3" y="0.3" width="16.4" height="14.4" rx="1.2" fill="#c2c2c2"/><path d="M3.5 11 L6.5 7.4 L8.6 9.8 L10.6 8 L13.5 11Z" fill="#222"/></svg>
<svg style="left:568.80px;top:44.30px;" width="4.60" height="4.80" viewBox="0 0 9 10"><path d="M0.4 0.6 H1.9 V9.4 H0.4Z M8.6 0.6 V9.4 L2.6 5Z" fill="#808080"/></svg>
<svg style="left:581.60px;top:44.30px;" width="3.20" height="4.80" viewBox="0 0 6 10"><path d="M5.2 0.8 L1.2 5 L5.2 9.2" fill="none" stroke="#6e6e6e" stroke-width="1.7"/></svg>
<div style="left:595.40px;top:41.30px;width:10.20px;height:9.90px;background:#1d1d1d;border:0.5px solid #404040;border-radius:0.8px;"></div>
<div class="t" style="left:598.60px;top:41.60px;line-height:10px;font-size:6.5px;color:#cfcfcf;">1</div>
<div class="t" style="left:607.20px;top:41.60px;line-height:10px;font-size:6.5px;color:#a8a8a8;">/ 3</div>
<svg style="left:622.60px;top:44.30px;" width="3.20" height="4.80" viewBox="0 0 6 10"><path d="M0.8 0.8 L4.8 5 L0.8 9.2" fill="none" stroke="#dadada" stroke-width="1.7"/></svg>
<svg style="left:634.20px;top:44.30px;" width="4.60" height="4.80" viewBox="0 0 9 10"><path d="M7.1 0.6 H8.6 V9.4 H7.1Z M0.4 0.6 V9.4 L6.4 5Z" fill="#dadada"/></svg>
<svg style="left:745.20px;top:42.90px;" width="9.20" height="7.80" viewBox="0 0 18 16"><path d="M4 0.5 H14 V4 H4Z" fill="#c2c2c2"/><path d="M1.5 4.6 H16.5 Q17.5 4.6 17.5 5.6 V12 H14.2 V9.4 H3.8 V12 H0.5 V5.6 Q0.5 4.6 1.5 4.6Z" fill="#c2c2c2"/><path d="M4.8 10.6 H13.2 V15.5 H4.8Z" fill="#c2c2c2"/></svg>
<svg style="left:757.20px;top:42.30px;" width="8.60" height="8.60" viewBox="0 0 17 17"><circle cx="8.5" cy="8.5" r="8.3" fill="#d2d2d2"/><path d="M7.6 3.4 H9.4 V5.2 H7.6Z M7.6 6.6 H9.4 V13.4 H7.6Z" fill="#3a2a2a"/></svg>
<div style="left:770.20px;top:43.00px;width:0.50px;height:7.20px;background:#4a4238;"></div>
<svg style="left:774.40px;top:43.20px;" width="6.60" height="7.20" viewBox="0 0 14 15"><path d="M0.4 0.5 H5 V4 H0.4Z" fill="#f2c24a"/><path d="M7.4 3 H12.4 V7 H7.4Z M7.4 9.6 H12.4 V14 H7.4Z" fill="#e6e6e6"/><path d="M3 4 V11.8 H7.4 M3 5.2 H7.4" fill="none" stroke="#bbb" stroke-width="0.9"/></svg>
<svg style="left:782.30px;top:45.00px;" width="3.10" height="2.70" viewBox="0 0 6 5"><path d="M0.2 0.3 H5.8 L3 4.8Z" fill="#9a9a9a"/></svg>
<div style="left:415.00px;top:55.60px;width:374.20px;height:278.20px;background:#ffffff;"></div>
<div style="left:789.60px;top:55.60px;width:3.60px;height:125.00px;background:#18474f;"></div>
<div class="d" style="left:469.50px;top:113.50px;line-height:8px;font-size:5.5px;">Form 88 (producers)</div>
<div class="d" style="left:469.50px;top:120.00px;line-height:8px;font-size:5.5px;">Paid Up/Pooling</div>
<div class="d" style="left:469.5px;top:132.5px;width:263.1px;text-align:center;line-height:8px;font-size:5.5px;font-weight:700;">OIL AND GAS LEASE</div>
<div style="left:530.40px;top:146.10px;width:96.80px;height:4.90px;background:#9ae29a;border:0.4px solid #74cf7c;"></div>
<div class="j" style="left:481.25px;top:144.50px;width:251.35px;line-height:8px;height:8px;font-size:5.5px;">THIS AGREEMENT, entered into this 6th day of November 2016, between <b><u>Jeffrey Lee Thompson,</u></b> with address</div>
<div class="j" style="left:469.50px;top:150.90px;width:263.10px;line-height:8px;height:8px;font-size:5.5px;">of 2985 Hartest Drive, Idaho Falls, ID 83404, hereinafter called Lessor, and <b><u>Peak Powder River Resources, LLC</u></b>,</div>
<div class="d" style="left:469.50px;top:157.30px;line-height:8px;font-size:5.5px;word-spacing:0.15px;">whose mailing address is 910 Main Ave., Durango, CO 81301 hereinafter called Lessee, does witness:</div>
<div class="j" style="left:481.25px;top:170.25px;width:251.35px;line-height:8px;height:8px;font-size:5.5px;">That Lessor, for and in consideration of the sum of Ten Dollars in hand paid and of the covenants and</div>
<div class="j" style="left:469.50px;top:176.64px;width:263.10px;line-height:8px;height:8px;font-size:5.5px;">agreements hereinafter contained to be performed by the Lessee, has this day granted, leased, and let and by these</div>
<div class="j" style="left:469.50px;top:183.03px;width:263.10px;line-height:8px;height:8px;font-size:5.5px;">presents does hereby grant, lease, and let exclusively unto the Lessee the hereinafter described land, and with the right</div>
<div class="j" style="left:469.50px;top:189.42px;width:263.10px;line-height:8px;height:8px;font-size:5.5px;">to unitize this lease of any part thereof with other oil and gas leases as to all or any part of the lands covered thereby as</div>
<div class="j" style="left:469.50px;top:195.81px;width:263.10px;line-height:8px;height:8px;font-size:5.5px;">hereinafter provided, for the purpose of carrying on geological, geophysical and other exploratory work, including core</div>
<div class="j" style="left:469.50px;top:202.20px;width:263.10px;line-height:8px;height:8px;font-size:5.5px;">drilling and the drilling, mining, and operating for, producing, and saving all of the oil, gas, casinghead gas,</div>
<div class="j" style="left:469.50px;top:208.59px;width:263.10px;line-height:8px;height:8px;font-size:5.5px;">casinghead gasoline and all other gases and their respective constituent vapors, and for constructing roads, laying pipe</div>
<div class="j" style="left:469.50px;top:214.98px;width:263.10px;line-height:8px;height:8px;font-size:5.5px;">lines, building tanks, storing oil, building power stations, telephone lines and other structures thereon necessary or</div>
<div class="j" style="left:469.50px;top:221.37px;width:263.10px;line-height:8px;height:8px;font-size:5.5px;">convenient for the operating of said land alone or conjointly with neighboring lands, to produce, save, take care of, and</div>
<div class="j" style="left:469.50px;top:227.76px;width:263.10px;line-height:8px;height:8px;font-size:5.5px;">manufacture all of such substances, and for housing and boarding employees, said tract of land with any reversionary</div>
<div class="d" style="left:469.50px;top:234.15px;line-height:8px;font-size:5.5px;">rights therein being situated in the County of <b><u>Campbell</u></b>, State of <b><u>Wyoming</u></b>, and described as follows:</div>
<div class="d" style="left:481.25px;top:246.50px;line-height:8px;font-size:5.5px;"><b><u>Township 42 North, Range 71 West, 6th P.M.</u></b></div>
<div class="d" style="left:481.25px;top:258.60px;line-height:8px;font-size:5.5px;"><b>Section 7: SE/4NW/4, Lots 21 (42.26)</b></div>
<div class="d" style="left:481.25px;top:271.20px;line-height:8px;font-size:5.5px;"><b>Section 18: SE/4NW/4, NW/4SE/4, Lots 2 (38.20), 7 (41.91), 8 (39.88), 16 (41.59)</b></div>
<div class="d" style="left:481.25px;top:284.00px;line-height:8px;font-size:5.5px;">Limited to all depths below 2500' below the surface of the earth or the base of the Ft Union Coal formation,</div>
<div class="d" style="left:481.25px;top:290.50px;line-height:8px;font-size:5.5px;">whichever is deeper</div>
<div class="d" style="left:481.25px;top:303.40px;line-height:8px;font-size:5.5px;">and containing <b><u>323.84</u></b> acres, more or less.</div>
<div class="j" style="left:481.25px;top:309.60px;width:251.35px;line-height:8px;height:8px;font-size:5.5px;">This lease also covers and includes all land and interest in land owned or claimed by Lessor adjacent or</div>
<div class="j" style="left:469.50px;top:315.80px;width:263.10px;line-height:8px;height:8px;font-size:5.5px;">contiguous to the land particularly described above, whether the same be in said section, township and range or in an</div>
<div class="j" style="left:469.50px;top:322.00px;width:263.10px;line-height:8px;height:8px;font-size:5.5px;">adjacent section, township and range along with all right, title and interest Lessor may hereafter acquire in and to oil,</div>
<div style="left:469.5px;top:328.2px;width:263.1px;height:5.5px;overflow:hidden;"><div class="j" style="left:0;top:0;width:100%;line-height:8px;height:8px;font-size:5.5px;">gas and other minerals in and under any such lands (hereinafter, together with the lands described above, referred to</div></div>
<div style="left:414.70px;top:336.80px;width:378.80px;height:16.60px;background:#1c1c1c;border-radius:2.5px 2.5px 0 0;"></div>
<div style="left:414.70px;top:353.30px;width:378.30px;height:0.50px;background:#2a2a2a;"></div>
<div class="t" style="left:421.00px;top:339.60px;line-height:10px;font-size:6.1px;color:#787878;">1 results in 8 ms.</div>
<svg style="left:778.20px;top:340.80px;" width="6.20" height="9.40" viewBox="0 0 12 18"><path d="M0.4 0.3 H11.6 V4.6 H0.4Z" fill="#b4b4b4"/><path d="M0.9 4.6 H11.1 L10.2 17.6 H1.8Z" fill="#ececec"/><circle cx="6" cy="10.6" r="1.3" fill="#333"/></svg>
<div class="t" style="left:420.00px;top:359.10px;line-height:10px;font-size:5.97px;color:#c4c4c4;font-weight:700;">Value</div>
<div class="t" style="left:544.50px;top:359.10px;line-height:10px;font-size:5.97px;color:#c4c4c4;font-weight:700;">Page No</div>
<div class="t" style="left:586.00px;top:359.10px;line-height:10px;font-size:5.97px;color:#c4c4c4;font-weight:700;">Span</div>
<div class="t" style="left:669.50px;top:359.10px;line-height:10px;font-size:5.97px;color:#c4c4c4;font-weight:700;">Confidence</div>
<div class="t" style="left:711.00px;top:359.10px;line-height:10px;font-size:5.97px;color:#c4c4c4;font-weight:700;">Source</div>
<div style="left:418.10px;top:371.20px;width:371.50px;height:11.30px;background:#292929;border:0.55px solid #5e5e5e;border-radius:1.4px;"></div>
<div class="t" style="left:420.00px;top:372.00px;line-height:10px;font-size:6.17px;color:#f4f4f4;">entered into this 6th day of November 2016</div>
<div class="t" style="left:544.50px;top:372.00px;line-height:10px;font-size:6.0px;color:#e0e0e0;">1</div>
<div class="t" style="left:586.00px;top:372.00px;line-height:10px;font-size:6.0px;color:#e0e0e0;">74-115 (42)</div>
<div class="t" style="left:669.50px;top:372.00px;line-height:10px;font-size:6.0px;color:#e0e0e0;">100%</div>
<div class="t" style="left:711.00px;top:372.00px;line-height:10px;font-size:6.0px;color:#e0e0e0;">Pattern-Based Collation Ex...</div>
<div style="left:417.50px;top:436.20px;width:370.00px;height:3.40px;background:#1b4750;border-radius:1.7px;"></div>
<div style="left:362.50px;top:165.00px;width:131.70px;height:43.20px;background:#f7941e;box-shadow:0.8px 1px 2.5px rgba(0,0,0,0.45);"></div>
<svg style="left:480.00px;top:140.00px;" width="60.00" height="60.00" viewBox="0 0 60 60"><path d="M15 46 L47.2 12.8" stroke="#f7941e" stroke-width="2" fill="none"/><path d="M50.4 9.6 L48.6 17.4 L42.8 11.6Z" fill="#f7941e"/></svg>
<div style="left:485.90px;top:178.00px;width:16.60px;height:16.60px;background:#f7941e;border-radius:50%;"></div>
<div style="left:480.00px;top:166.00px;width:14.20px;height:41.00px;background:#f7941e;"></div>
<div class="t" style="left:362.5px;top:168.7px;width:131.7px;text-align:center;white-space:normal;line-height:11.4px;font-size:9.3px;font-weight:700;color:#fff;padding:0 2px 0 0;white-space:nowrap;">Now we are getting the<br>result that we want<br>returned.</div>
<div class="t" style="left:491.30px;top:180.60px;line-height:12px;font-size:9.8px;color:#fff;font-weight:700;">6</div>
</body></html>
